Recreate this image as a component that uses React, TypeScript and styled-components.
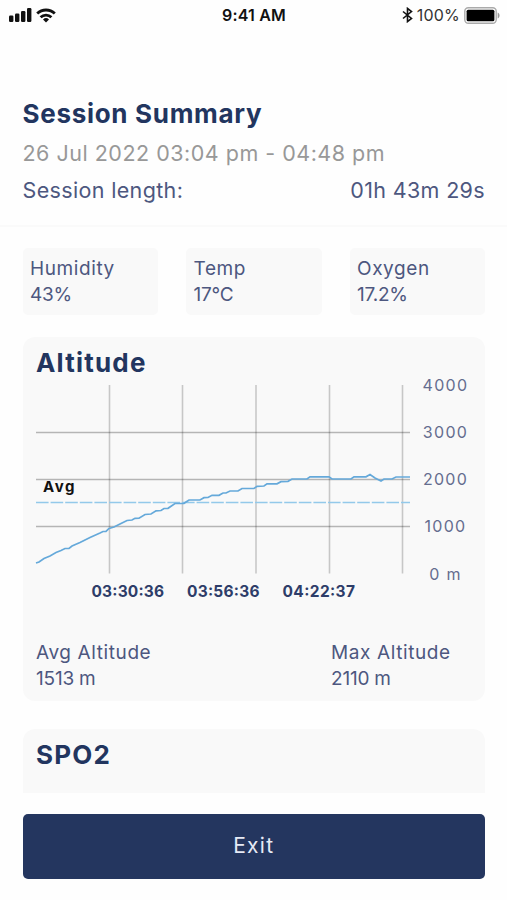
import styled, { createGlobalStyle } from 'styled-components';

const GlobalStyle = createGlobalStyle`
  * {
    box-sizing: border-box;
  }
  body {
    margin: 0;
    background-color: #fefefe;
    font-family: Inter, 'Liberation Sans', sans-serif;
    color: #4d577f;
  }
`;

const Screen = styled.main`
  display: flex;
  flex-direction: column;
  height: 900px;
  overflow: hidden;
`;

const StatusBar = styled.div`
  display: grid;
  grid-template-columns: 1fr auto 1fr;
  align-items: center;
  height: 30px;
  padding: 0 7px 0 8px;
  color: #111;
`;

const StatusGroup = styled.div<{ $end?: boolean }>`
  display: flex;
  align-items: center;
  justify-content: ${({ $end }) => ($end ? 'flex-end' : 'flex-start')};
  gap: 4px;
`;

const Clock = styled.span`
  font-size: 16px;
  font-weight: 600;
  letter-spacing: 0.2px;
`;

const BatteryText = styled.span`
  font-size: 16px;
  letter-spacing: 0.2px;
  color: #333;
`;

const Header = styled.header`
  padding: 63px 22px 0 22.5px;
  height: 197px;
  border-bottom: 2px solid #fafafa;
`;

const PageTitle = styled.h1`
  margin: 0;
  font-size: 26px;
  line-height: 41px;
  font-weight: 700;
  letter-spacing: 0.7px;
  color: #22355f;
`;

const DateRange = styled.p`
  margin: 0;
  font-size: 21.5px;
  line-height: 39px;
  letter-spacing: 0.5px;
  color: #989898;
`;

const LengthRow = styled.div`
  display: flex;
  justify-content: space-between;
  font-size: 21.5px;
  line-height: 34px;
  letter-spacing: 0.35px;
`;

const Content = styled.section`
  flex: none;
  height: 566px;
  padding: 21px 22px 0 22.5px;
  overflow: hidden;
`;

const Conditions = styled.div`
  display: grid;
  grid-template-columns: repeat(3, 1fr);
  gap: 28px;
  margin-bottom: 22px;
`;

const Stat = styled.div`
  font-size: 19px;
  line-height: 26px;
  letter-spacing: 0.6px;
`;

const StatValue = styled.div`
  letter-spacing: -0.2px;
`;

const Condition = styled(Stat)`
  height: 67px;
  padding: 8px 7.5px;
  border-radius: 5px;
  background-color: #f9f9f9;
`;

const Card = styled.article<{ $height: number }>`
  height: ${({ $height }) => $height}px;
  margin-bottom: 28px;
  border-radius: 12px;
  background-color: #f9f9f9;
  padding: 9px 13.5px 0;
`;

const CardTitle = styled.h2`
  margin: 0;
  font-size: 26px;
  line-height: 34px;
  font-weight: 700;
  letter-spacing: 1.2px;
  color: #22355f;
`;

const Chart = styled.svg`
  display: block;
  width: 435px;
  height: 230px;
  overflow: visible;
`;

const Totals = styled.div`
  display: grid;
  grid-template-columns: 295px 1fr;
  margin-top: 30px;
`;

const Footer = styled.footer`
  padding: 21px 22px 0 22.5px;
`;

const ExitButton = styled.button`
  display: block;
  width: 100%;
  height: 65px;
  padding: 0 0 3px;
  border: none;
  border-radius: 5px;
  background-color: #24365f;
  color: #e6eaf5;
  font-family: inherit;
  font-size: 21px;
  letter-spacing: 1.3px;
`;

const conditions = [
  { label: 'Humidity', value: '43%' },
  { label: 'Temp', value: '17°C' },
  { label: 'Oxygen', value: '17.2%' },
];

const yTicks = [
  { label: '4000', y: 5 },
  { label: '3000', y: 52.5 },
  { label: '2000', y: 99.5 },
  { label: '1000', y: 146.5 },
  { label: '0 m', y: 194 },
];

const xTicks = [
  { label: '03:30:36', x: 91.5 },
  { label: '03:56:36', x: 187 },
  { label: '04:22:37', x: 282.5 },
];

const columns = [109.5, 182.5, 256, 329.5, 402.5];

const altitude =
  '36,183 39,182 44,178.5 50,176 56,172.5 61,170.5 65,168.5 69,168.3 72,166 80,162.5 90,157.5 100,153 103,151.5 106,151.3 109,148.5 114,147 118,145 122,143 127,140.5 132,140 135,138.3 139,138.2 145,134.5 151,134 156,130.8 161,130.5 164,128.5 168,128.3 175,123.5 184,123.3 189,120 200,120 204,117.7 208,117.5 212,115.3 219,115.3 223,113 226,113 230,111 238,111 242,108.5 254,108.5 257,106.3 264,106 267,103.8 277,103.8 281,101.7 288,101.3 292,99 307,99 310,96.8 329,96.8 332,99 351,99 354,96.8 366,96.8 370,94.5 375,98 381,101 384,99 392,99 396,97 410,97';

const SignalIcon = () => (
  <svg width='24' height='14' viewBox='0 0 24 14' fill='#111'>
    <rect x='1' y='7.5' width='4.4' height='6.5' rx='1.2' />
    <rect x='7' y='5.5' width='4.4' height='8.5' rx='1.2' />
    <rect x='13' y='3' width='4.4' height='11' rx='1.2' />
    <rect x='19' y='0' width='4.4' height='14' rx='1.2' />
  </svg>
);

const WifiIcon = () => (
  <svg width='20' height='15' viewBox='0 0 20 15' fill='none' stroke='#111' strokeWidth='2.8'>
    <path d='M1.2 5.6a12.6 12.6 0 0 1 17.6 0' />
    <path d='M4.6 9.2a7.8 7.8 0 0 1 10.8 0' />
    <path d='M10 14.4l-3-3a4.3 4.3 0 0 1 6 0z' fill='#111' stroke='none' />
  </svg>
);

const BluetoothIcon = () => (
  <svg width='11' height='16' viewBox='0 0 11 16' fill='none' stroke='#111' strokeWidth='1.6'>
    <path d='M1 4.5l8.5 7L5.5 14.6V1.4l4 3.1L1 11.5' />
  </svg>
);

const BatteryIcon = () => (
  <svg width='36' height='17' viewBox='0 0 36 17'>
    <rect x='0.8' y='0.8' width='31.4' height='15.4' rx='3.5' fill='#fff' stroke='#aaa' strokeWidth='1.4' />
    <rect x='2.6' y='2.7' width='27.8' height='11.6' rx='1.5' fill='#000' />
    <path d='M33.7 5.5c2.4.8 2.4 5.2 0 6z' fill='#999' />
  </svg>
);

function AltitudeChart() {
  return (
    <Chart viewBox='36 0 435 230'>
      <g stroke='#000' strokeOpacity='0.2' strokeWidth='1.6'>
        {columns.map((x) => (
          <line key={x} x1={x} x2={x} y1='5' y2='193.5' />
        ))}
        {yTicks.slice(1, 4).map(({ y }) => (
          <line key={y} x1='36' x2='410' y1={y} y2={y} strokeOpacity='0.27' />
        ))}
      </g>
      <line x1='36' x2='410' y1='122.5' y2='122.5' stroke='#93c9ea' strokeWidth='1.7' strokeDasharray='12.6 2' />
      <polyline points={altitude} fill='none' stroke='#65a9da' strokeWidth='1.7' />
      <text x='43' y='111.5' fontSize='15' fontWeight='700' textLength='31.5' fill='#111'>
        Avg
      </text>
      {yTicks.map(({ label, y }) => (
        <text key={label} x='445.5' y={y + 5.5} fontSize='16' letterSpacing='1.3' textAnchor='middle' fill='#656d8f'>
          {label}
        </text>
      ))}
      {xTicks.map(({ label, x }) => (
        <text key={label} x={x} y='217' fontSize='15.5' fontWeight='700' textLength='72.5' fill='#2e3d69'>
          {label}
        </text>
      ))}
    </Chart>
  );
}

function App() {
  return (
    <Screen>
      <GlobalStyle />
      <StatusBar>
        <StatusGroup>
          <SignalIcon />
          <WifiIcon />
        </StatusGroup>
        <Clock>9:41 AM</Clock>
        <StatusGroup $end>
          <BluetoothIcon />
          <BatteryText>100%</BatteryText>
          <BatteryIcon />
        </StatusGroup>
      </StatusBar>
      <Header>
        <PageTitle>Session Summary</PageTitle>
        <DateRange>26 Jul 2022 03:04 pm - 04:48 pm</DateRange>
        <LengthRow>
          <span>Session length:</span>
          <span>01h 43m 29s</span>
        </LengthRow>
      </Header>
      <Content>
        <Conditions>
          {conditions.map(({ label, value }) => (
            <Condition key={label}>
              {label}
              <StatValue>{value}</StatValue>
            </Condition>
          ))}
        </Conditions>
        <Card $height={364}>
          <CardTitle>Altitude</CardTitle>
          <AltitudeChart />
          <Totals>
            <Stat>
              Avg Altitude
              <StatValue>1513 m</StatValue>
            </Stat>
            <Stat>
              Max Altitude
              <StatValue>2110 m</StatValue>
            </Stat>
          </Totals>
        </Card>
        <Card $height={364}>
          <CardTitle>SPO2</CardTitle>
        </Card>
      </Content>
      <Footer>
        <ExitButton>Exit</ExitButton>
      </Footer>
    </Screen>
  );
}

export default App;
